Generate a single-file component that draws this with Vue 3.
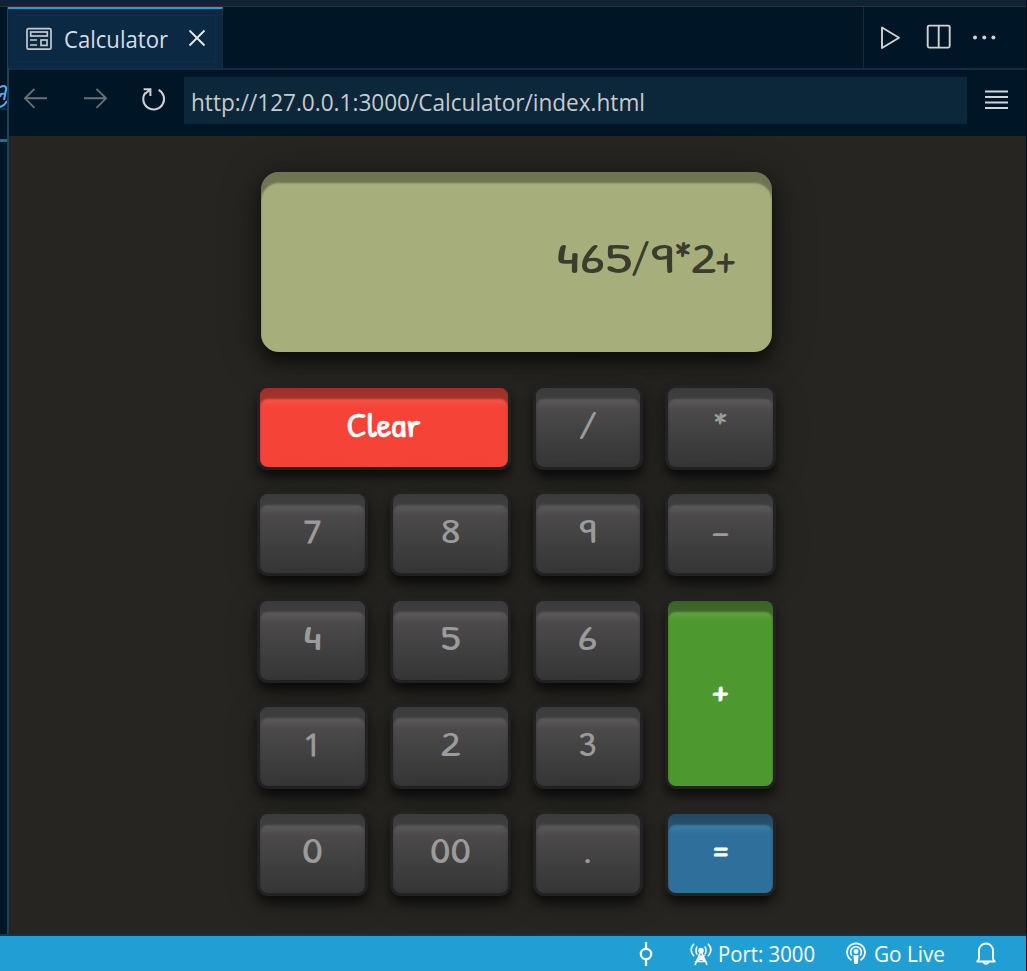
<script setup>
const keys = [
  { t: 'Clear', c: 'clear', w: 74, s: 33 },
  { t: '/', c: 'c3', w: 19, s: 34, y: 33 },
  { t: '*', c: 'c4', w: 15, s: 34 },
  { t: '7', c: 'plain', w: 18 },
  { t: '8', c: 'c2', w: 20 },
  { t: '9', c: 'c3', w: 18 },
  { t: '-', c: 'c4', w: 19 },
  { t: '4', w: 19 },
  { t: '5', c: 'c2', w: 20 },
  { t: '6', c: 'c3', w: 20 },
  { t: '+', c: 'plus', w: 17, s: 29, y: 30 },
  { t: '1', c: 'plain', w: 18 },
  { t: '2', c: 'c2', w: 20 },
  { t: '3', c: 'c3', w: 18 },
  { t: '0', w: 21, s: 35 },
  { t: '00', c: 'c2', w: 41, s: 35 },
  { t: '.', c: 'c3', w: 9 },
  { t: '=', c: 'equals', w: 20, s: 34, y: 32 },
]
</script>

<template>
  <div class="window">
    <div class="topstrip"></div>
    <div class="main">
      <aside class="sliver">
        <div class="crumb"><svg width="7" height="32" viewBox="0 0 7 32"><path d="M0 10.5C3 8 7 9 6 13L4 23M6 17C2 16 0 17 0 20M0 30L4 28L7 24" fill="none" stroke="#5daaf0" stroke-width="2" /></svg></div>
        <div class="rule"></div>
        <div class="accent"></div>
      </aside>
      <section class="editor">
        <header class="tabs">
          <div class="tab">
            <svg class="tabicon" width="26" height="24" viewBox="0 0 26 24" fill="none" stroke="#c4c9cc" stroke-width="1.7">
              <rect x="1" y="1.6" width="24" height="20.6" rx="1.5" /><rect x="4.7" y="5" width="16.6" height="4" />
              <path d="M4 13h7M4 18h7" /><rect x="15" y="13" width="6" height="5.4" />
            </svg>
            <svg class="tabname" width="106" height="36"><text x="0" y="27" font-size="23.5" textLength="104" lengthAdjust="spacingAndGlyphs">Calculator</text></svg>
            <svg class="close" width="18" height="18" viewBox="0 0 18 18"><path d="M1.5 1.5L16.5 16.5M16.5 1.5L1.5 16.5" stroke="#e4e9ed" stroke-width="1.9" /></svg>
          </div>
          <div class="actions">
            <svg width="122" height="30" viewBox="0 0 122 30" fill="none" stroke="#d0d2d2" stroke-width="1.9">
              <path d="M2 5.5V26L19 15.8Z" stroke-linejoin="round" />
              <rect x="47.7" y="3.6" width="22" height="22" rx="1.5" /><path d="M58.7 3.6V25.6" />
              <g fill="#d0d2d2" stroke="none"><circle cx="95" cy="15.5" r="2" /><circle cx="104.3" cy="15.5" r="2" /><circle cx="113.4" cy="15.5" r="2" /></g>
            </svg>
          </div>
        </header>
        <nav class="toolbar">
          <svg class="navicons" width="150" height="36" viewBox="0 0 150 36" fill="none" stroke-width="1.9">
            <path d="M38 18.3H16M25.5 8.8L16 18.3L25.5 27.8M75 18.3H97M87.5 8.8L97 18.3L87.5 27.8" stroke="#677078" />
            <path d="M149.6 9.9A10.4 10.4 0 1 1 136.5 12.6M134.6 9.2H141.4V16M141.4 9.2L136.5 13.5" stroke="#d0d2d2" stroke-width="2" />
          </svg>
          <div class="url"><svg width="470" height="46"><text x="7" y="34" font-size="23.5" textLength="454" lengthAdjust="spacingAndGlyphs">http://127.0.0.1:3000/Calculator/index.html</text></svg></div>
          <svg class="menu" width="23" height="20" viewBox="0 0 23 20"><path d="M0 1.5H23M0 7H23M0 12.5H23M0 18H23" stroke="#cfd4d6" stroke-width="2" /></svg>
        </nav>
        <main class="page">
          <div class="display">
            <svg width="200" height="60">
              <text x="10" y="46" font-size="43" textLength="76" lengthAdjust="spacingAndGlyphs">465</text>
              <text x="84.5" y="47" font-size="45">/</text>
              <text x="104" y="46" font-size="43" textLength="24" lengthAdjust="spacingAndGlyphs">9</text>
              <text x="128" y="47" font-size="45">*</text>
              <text x="145" y="46" font-size="43" textLength="25" lengthAdjust="spacingAndGlyphs">2</text>
              <text x="169" y="47" font-size="45">+</text>
            </svg>
          </div>
          <div class="keys">
            <button v-for="k in keys" :key="k.t" class="key" :class="k.c">
              <svg width="90" height="44"><text x="44.5" :y="k.y || 32" text-anchor="middle" :font-size="k.s || 33" :textLength="k.w" lengthAdjust="spacingAndGlyphs">{{ k.t }}</text></svg>
            </button>
          </div>
        </main>
      </section>
    </div>
    <footer class="status">
      <svg class="commit" width="14" height="26" viewBox="0 0 14 26" fill="none" stroke="#fff" stroke-width="2.2"><circle cx="7" cy="13" r="5.2" /><path d="M7 1V8M7 18V25" /></svg>
      <svg class="tower" width="22" height="24" viewBox="0 0 22 24" fill="none" stroke="#fff" stroke-width="1.6">
        <circle cx="11" cy="8.5" r="2" fill="#fff" /><path d="M10.5 10L5 23M11.5 10L17 23M8.5 14H13.5L6.5 19.5H15.5L8.5 14M7.2 4.5Q4.8 8.5 7.2 12.5M14.8 4.5Q17.2 8.5 14.8 12.5M4 1.8Q-1.7 8 4 14.2M18 1.8Q23.7 8 18 14.2" />
      </svg>
      <svg class="port" width="100" height="34"><text x="-1" y="26" font-size="22" textLength="97" lengthAdjust="spacingAndGlyphs">Port: 3000</text></svg>
      <svg class="cast" width="20" height="24" viewBox="0 0 20 24" fill="none" stroke="#fff" stroke-width="1.7">
        <path d="M5.5 18.2A9 9 0 1 1 14.5 18.2M6 13.8A5.4 5.4 0 1 1 14 13.8" /><circle cx="10" cy="9.5" r="2.4" fill="#fff" stroke="none" /><path d="M7.4 13.2H12.6L11.8 22H8.2Z" fill="#fff" stroke="none" />
      </svg>
      <svg class="live" width="74" height="34"><text x="-1" y="26" font-size="22" textLength="71" lengthAdjust="spacingAndGlyphs">Go Live</text></svg>
      <svg class="bell" width="20" height="24" viewBox="0 0 20 24" fill="none" stroke="#fff" stroke-width="1.8"><path d="M3 17V8.5A7 7 0 0 1 17 8.5V17L18.8 19.5H1.2Z M7.5 20A2.6 2.6 0 0 0 12.5 20" stroke-linejoin="round" /></svg>
    </footer>
  </div>
</template>

<style>
body { background: #001526; overflow: hidden; }
</style>

<style scoped>
.window { box-sizing: border-box; width: 1027px; height: 971px; border-right: 1px solid #001020; background: #001526; font-family: "Segoe UI", "Open Sans", sans-serif; display: flex; flex-direction: column; }
svg { display: block; overflow: visible; flex: none; }
.topstrip { height: 6px; background: #102334; border-bottom: 1px solid #332f2d; flex: none; }
.main { display: flex; height: 927px; }
.sliver { width: 7px; border-right: 2px solid #19415a; flex: none; overflow: hidden; }
.crumb { padding-top: 70px; height: 31px; }
.rule { height: 2px; background: #122d42; }
.accent { height: 3px; background: #176f9f; margin-top: 29px; }
.editor { flex: 1; }
.tabs { height: 61px; border-bottom: 2px solid #122d42; display: flex; justify-content: space-between; }
.tab { box-sizing: border-box; width: 215px; height: 61px; margin-left: -1px; background: #0b2942; border-top: 2px solid #219fd5; border-right: 1px solid #252c32; display: flex; align-items: center; padding-left: 18px; box-shadow: inset 0 0 0 6px #0b2942, inset 0 0 0 7px #102d44; }
.tabname { fill: #d2dee7; margin: 1px 18px 0 12px; }
.close { margin-top: -2px; }
.actions { width: 163px; box-sizing: border-box; border-left: 1px solid #122d42; padding: 15px 0 0 16px; }
.toolbar { height: 66px; display: flex; box-sizing: border-box; padding-top: 7px; }
.navicons { margin-top: 3px; }
.url { width: 783px; height: 47px; margin-left: 25px; background: #0c263a; fill: #c5cbd0; }
.menu { margin: 13px 0 0 18px; }
.page { height: 798px; background: #272521; padding-top: 36px; box-sizing: border-box; }
.display { box-sizing: border-box; width: 511px; height: 180px; margin-left: 252px; border-radius: 18px; background: #a6af7c; box-shadow: inset 0 11px 2px rgba(50,50,38,.47), 0 9px 16px 0 #0d0d0c, 0 5px 44px rgba(0,0,0,.3); display: flex; justify-content: flex-end; padding: 55px 26px 0 0; font-family: "Patrick Hand", "Comic Sans MS", Lato, sans-serif; fill: #3b3c2d; }
.keys { width: 513px; margin: 36px 0 0 251px; display: grid; grid-template-columns: 133px 143px 132px 105px; grid-template-rows: 106px 107px 106px 107px 79px; align-items: start; }
.key { width: 105px; height: 79px; border: 0; padding: 0; border-radius: 8px; display: flex; justify-content: center; align-items: center; font-family: "Patrick Hand", "Comic Sans MS", Lato, sans-serif; fill: #9b9b9b; background: linear-gradient(transparent, rgba(255,255,255,.07) 12px, transparent 22px), linear-gradient(#545152, #353535); box-shadow: inset 0 11px 2px rgba(35,35,35,.5), 0 0 0 3px #222, 0 8px 12px 2px #0b0b0a, 0 4px 36px rgba(0,0,0,.22); }
.key svg { margin-top: -2px; }
.key.plain { font-family: "Open Sans", sans-serif; stroke: #9b9b9b; stroke-width: .8px; }
.plain text { font-size: 31px; }
.key.c2 { width: 115px; }
.key.c3 { width: 104px; }
.key.clear { grid-column: span 2; width: 248px; background: linear-gradient(transparent, rgba(255,255,255,.08) 12px, transparent 20px), #f54337; }
.key.plus { grid-column: 4; grid-row: 3 / span 2; height: 185px; background: linear-gradient(transparent, rgba(255,255,255,.09) 12px, transparent 20px), #4e992f; }
.key.equals { background: linear-gradient(transparent, rgba(255,255,255,.08) 12px, transparent 20px), #2e709b; }
.key.clear, .key.plus, .key.equals { fill: #fff; font-weight: 700; }
.key.clear { font-weight: 400; stroke: #fff; stroke-width: .6px; box-shadow: inset 0 11px 2px rgba(30,15,10,.4), 0 0 0 3px #222, 0 8px 12px 2px #0b0b0a; }
.key.plus { box-shadow: inset 0 11px 2px rgba(25,30,20,.43), 0 0 0 3px #222, 0 8px 12px 2px #0b0b0a; }
.key.equals { box-shadow: inset 0 11px 2px rgba(15,25,35,.43), 0 0 0 3px #222, 0 8px 12px 2px #0b0b0a; }
.status { height: 35px; background: #219fd5; border-top: 2px solid #143449; display: flex; fill: #fff; }
.commit { margin: 5px 0 0 639px; }
.tower { margin: 6px 0 0 37px; }
.port { margin-left: 7px; }
.cast { margin: 6px 0 0 27px; }
.live { margin-left: 9px; }
.bell { margin: 6px 0 0 27px; }
</style>
